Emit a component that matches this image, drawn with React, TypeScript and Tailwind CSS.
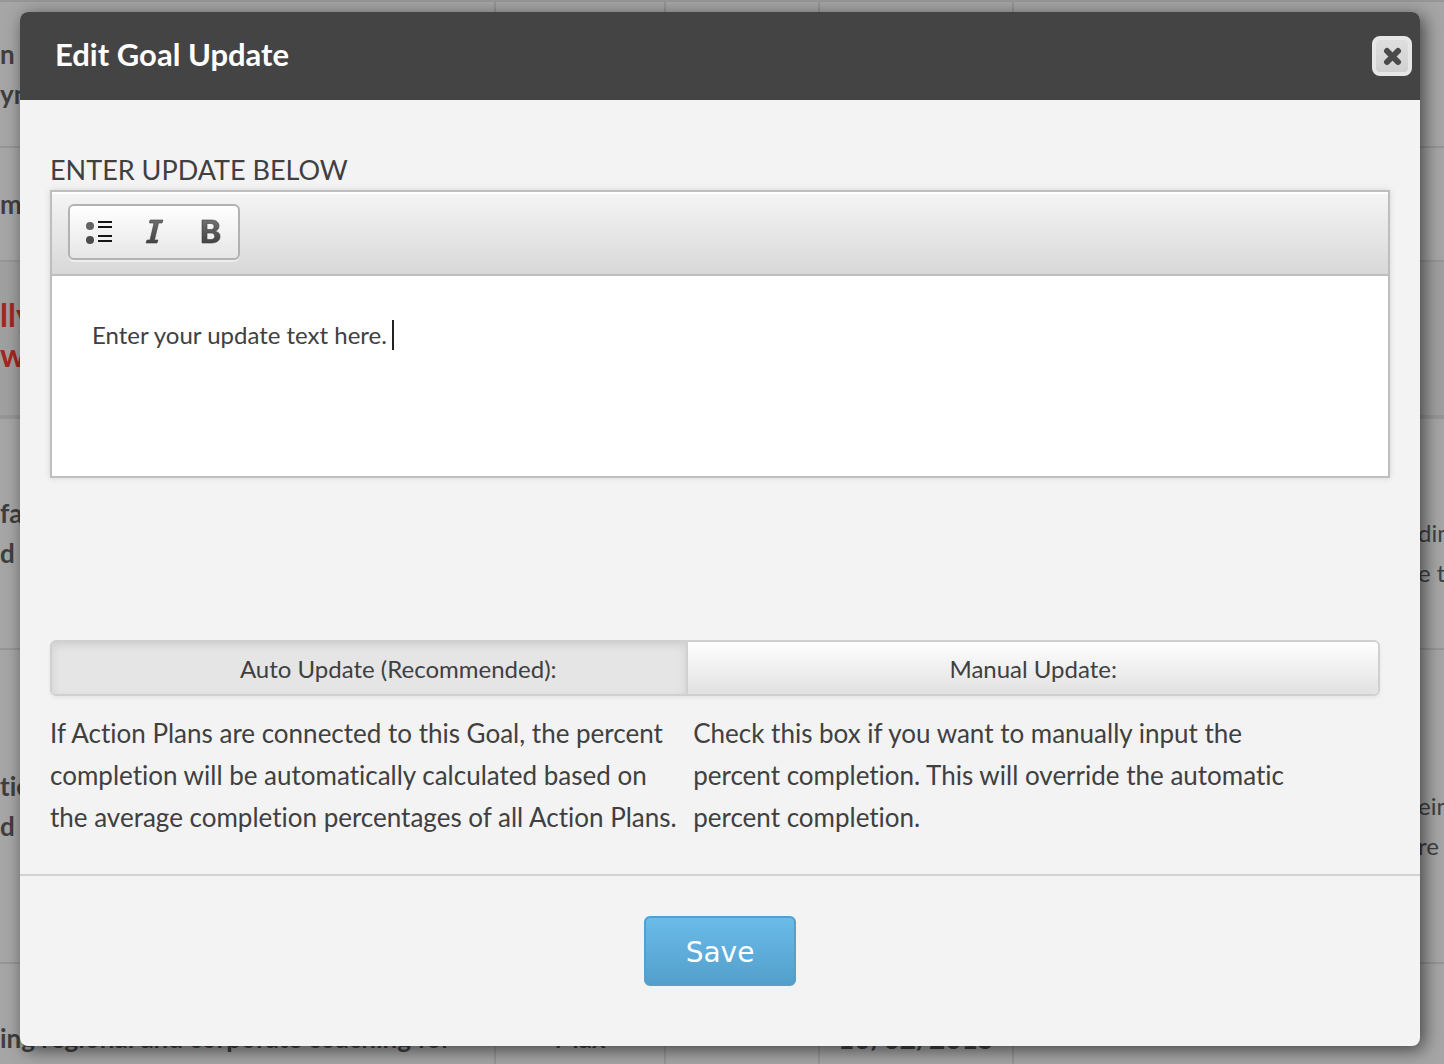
import React, { useState } from "react";

const rows = [
  {
    height: "h-[146px]",
    tone: "border-b-2 pt-8",
    text: ["n the", "ynes"],
    note: [],
  },
  { height: "h-[114px]", tone: "border-b-2 pt-9", text: ["men"], note: [] },
  {
    height: "h-[156px]",
    tone: "border-b-4 pt-[33px] bg-[#a0a0a0] text-[#a5271f] text-[32px]",
    text: ["lly", "wa"],
    note: [],
  },
  {
    height: "h-[232px]",
    tone: "border-b-2 pt-[74px]",
    text: ["fact", "d we"],
    note: ["din", "e to"],
  },
  {
    height: "h-[314px]",
    tone: "border-b-2 pt-[116px]",
    text: ["ties", "d we"],
    note: ["ein", "re"],
  },
  {
    height: "h-[140px]",
    tone: "pt-[54px]",
    text: ["ing regional and corporate coaching for"],
    owner: "Max",
    date: "10/02/2015",
    note: [],
  },
];

const GoalsTable = () => {
  return (
    <table className="w-full table-fixed border-collapse text-[26px] leading-10 font-bold text-[#3f3f3f] whitespace-nowrap">
      <colgroup>
        <col className="w-[495px]" />
        <col className="w-[170px]" />
        <col className="w-[154px]" />
        <col className="w-[194px]" />
        <col />
      </colgroup>
      <tbody className="border-t-2 border-[#969696]">
        {rows.map((row, i) => (
          <tr key={i} className={`align-top ${row.height}`}>
            <td className={`border-r-2 border-[#969696] p-0 ${row.tone}`}>
              {row.text.map((line) => (
                <div key={line}>{line}</div>
              ))}
            </td>
            <td
              className={`border-r-2 border-[#969696] p-0 text-center ${row.tone}`}
            >
              {row.owner}
            </td>
            <td className={`border-r-2 border-[#969696] p-0 ${row.tone}`}></td>
            <td
              className={`border-r-2 border-[#969696] p-0 text-center text-[28px] ${row.tone}`}
            >
              {row.date}
            </td>
            <td
              className={`overflow-hidden border-[#969696] p-0 text-2xl leading-10 font-normal ${row.tone}`}
            >
              <div className="pt-5 pl-[404px]">
                {row.note.map((line) => (
                  <div key={line}>{line}</div>
                ))}
              </div>
            </td>
          </tr>
        ))}
      </tbody>
    </table>
  );
};

const Toolbar = () => {
  return (
    <div className="border-b-2 border-[#bebebe] bg-linear-to-b from-[#f5f5f5] to-[#d8d8d8] px-4 pt-3 pb-3.5 shadow-[inset_0_2px_0_#fff]">
      <div className="flex h-14 w-[172px] items-center rounded-md border-2 border-[#b2b2b2] bg-linear-to-b from-white to-[#e6e6e6] shadow-[0_2px_0_#ededed]">
        <button
          type="button"
          aria-label="Bulleted list"
          className="flex w-14 justify-center pl-0.5"
        >
          <svg width="28" height="26" viewBox="0 0 28 26">
            <defs>
              <linearGradient id="ink" x1="0" y1="0" x2="0" y2="1">
                <stop offset="0" stopColor="#707070" />
                <stop offset="1" stopColor="#444" />
              </linearGradient>
            </defs>
            <circle cx="5" cy="7" r="4" fill="#636363" />
            <circle cx="5" cy="21" r="4" fill="#4c4c4c" />
            <path
              d="M13 3h14M13 8h14M13 17h14M13 22h14"
              stroke="#151515"
              strokeWidth="2"
            />
          </svg>
        </button>
        <button
          type="button"
          aria-label="Italic"
          className="flex w-14 justify-center pl-0.5"
        >
          <svg width="20" height="26" viewBox="0 0 20 26">
            <path
              d="M5 1H18L17 4H13.500L9.500 21H13L12 24H1L2 21H5L9 4H4.500Z"
              fill="url(#ink)"
              stroke="#3c3c3c"
              strokeWidth="0.6"
            />
          </svg>
        </button>
        <button
          type="button"
          aria-label="Bold"
          className="flex w-14 justify-center pl-0.5"
        >
          <svg width="20" height="26" viewBox="0 0 20 26">
            <path
              d="M1 1H10C16 1 18 4 18 7C18 10 16 12 13 12C17 13 19 14 19 17.500C19 22 15 24 10 24H1ZM6 4.500V10.500H10C14 10.500 14 4.500 10 4.500ZM6 14V20.500H10C15 20.500 15 14 10 14Z"
              fill="url(#ink)"
              stroke="#3c3c3c"
              strokeWidth="0.6"
              fillRule="evenodd"
            />
          </svg>
        </button>
      </div>
    </div>
  );
};

const Modal = () => {
  const [mode, setMode] = useState("auto");
  const [text, setText] = useState("Enter your update text here.");
  const [typing, setTyping] = useState(false);

  return (
    <div
      role="dialog"
      aria-labelledby="modalTitle"
      className="relative mt-3 mr-6 mb-[18px] ml-5 overflow-hidden rounded-lg bg-[#f3f3f3] shadow-[4px_4px_18px_rgba(0,0,0,0.6)]"
    >
      <div className="flex h-[88px] items-center justify-between bg-[#444] pr-2 pl-[35px]">
        <h2
          id="modalTitle"
          className="pb-1 text-[31px] leading-10 font-bold text-white"
        >
          Edit Goal Update
        </h2>
        <button
          type="button"
          aria-label="Close"
          className="flex size-10 items-center justify-center rounded-lg border-4 border-[#e6e6e6] bg-linear-to-b from-[#dedede] to-[#d0d0d0]"
        >
          <svg width="20" height="20" viewBox="0 0 20 20">
            <path
              d="M5 5L16 16M16 5L5 16"
              stroke="#4a4a4a"
              strokeWidth="6"
              strokeLinecap="round"
            />
          </svg>
        </button>
      </div>

      <form>
        <div className="px-[30px] pt-[50px]">
          <label htmlFor="update" className="block text-[27px] leading-10">
            ENTER UPDATE BELOW
          </label>
          <div className="border-2 border-[#bebebe] bg-white shadow-[0_0_6px_rgba(0,0,0,0.12)]">
            <Toolbar />
            <div className="relative">
              <textarea
                id="update"
                value={text}
                onFocus={() => setTyping(true)}
                onChange={(e) => setText(e.target.value)}
                className="block h-[200px] w-full resize-none px-10 py-10 text-2xl leading-[38px] outline-none"
              />
              {!typing && (
                <span className="absolute top-11 left-[340px] h-[30px] w-0.5 bg-[#222]" />
              )}
            </div>
          </div>

          <div className="mt-[162px] mr-[10px] flex h-14 rounded-md border-2 border-[#d0d0d0] text-2xl shadow-[0_2px_4px_rgba(0,0,0,0.06)]">
            <button
              type="button"
              aria-pressed={mode === "auto"}
              onClick={() => setMode("auto")}
              className="w-[48%] border-r-2 border-[#d0d0d0] bg-[#e5e5e5] pt-0.5 pl-[58px] shadow-[inset_0_3px_8px_rgba(0,0,0,0.1)]"
            >
              Auto Update (Recommended):
            </button>
            <button
              type="button"
              aria-pressed={mode === "manual"}
              onClick={() => setMode("manual")}
              className="flex-1 rounded-r-sm bg-linear-to-b from-white to-[#e1e1e1] pt-0.5"
            >
              Manual Update:
            </button>
          </div>

          <div className="mt-4 flex text-[26px] leading-[42px]">
            <p className="w-[48%] pr-2.5">
              If Action Plans are connected to this Goal, the percent
              completion will be automatically calculated based on the average
              completion percentages of all Action Plans.
            </p>
            <p className="w-[47%]">
              Check this box if you want to manually input the percent
              completion. This will override the automatic percent completion.
            </p>
          </div>
        </div>

        <div className="mt-9 flex h-[172px] items-start justify-center border-t-2 border-[#d2d2d2] pt-10">
          <button
            type="submit"
            className="h-[70px] w-[152px] rounded-md border-2 border-[#559fcb] bg-linear-to-b from-[#6abbe9] to-[#539fcb] pt-1 font-['DejaVu_Sans',Verdana,sans-serif] text-[28px] text-white"
          >
            Save
          </button>
        </div>
      </form>
    </div>
  );
};

const App = () => {
  return (
    <div className="relative min-h-screen overflow-hidden bg-[#a6a6a6] font-[Lato,Calibri,sans-serif] text-[#404040] [font-variant-ligatures:none]">
      <div className="absolute inset-0 overflow-hidden" aria-hidden="true">
        <GoalsTable />
      </div>
      <Modal />
    </div>
  );
};

export default App;
